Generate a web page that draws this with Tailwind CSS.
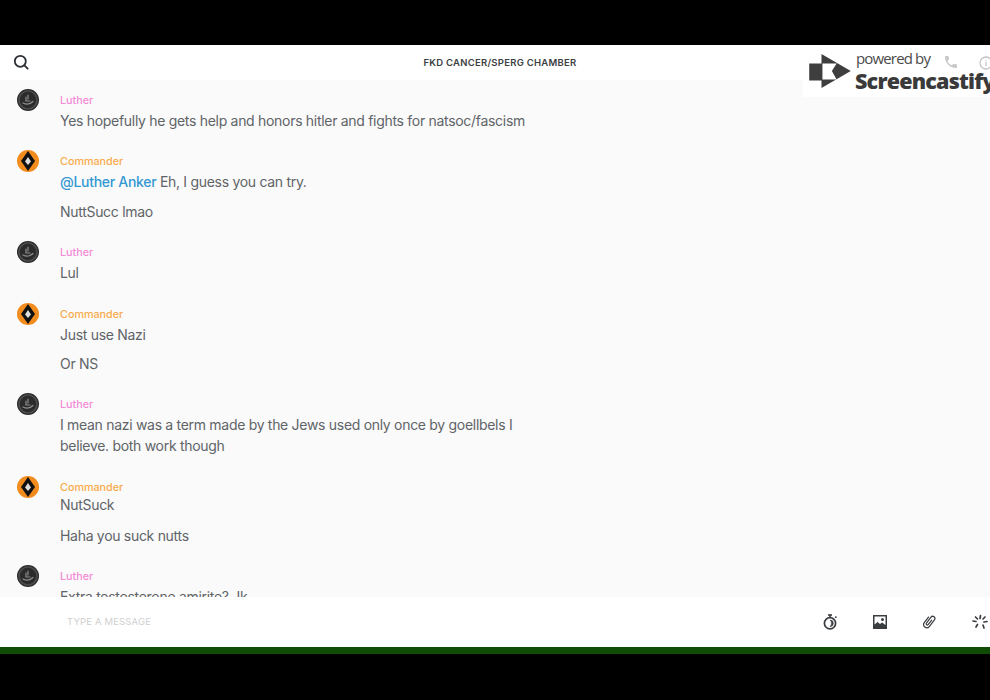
<!DOCTYPE html>
<html lang="en">
<head>
    <meta charset="UTF-8">
    <title>FKD CANCER/SPERG CHAMBER</title>
    <script src="https://cdn.jsdelivr.net/npm/@tailwindcss/browser@4"></script>
</head>
<body class="bg-black font-['Inter',sans-serif] overflow-hidden">
    <div class="h-[700px] w-[990px] flex flex-col pt-[45px] pb-[46px] relative overflow-hidden">

        <!-- Header -->
        <header class="h-[35px] shrink-0 bg-white relative flex items-center justify-center pl-[10px] pt-[1px]">
            <svg class="absolute left-[13px] top-[9px] w-[16px] h-[16px]" viewBox="0 0 16 16" fill="none" stroke="#2b2f33" stroke-width="1.8" stroke-linecap="round">
                <circle cx="7.300" cy="7.300" r="5.500"/>
                <path d="M11.400 11.400 14.700 14.700"/>
            </svg>
            <h1 class="text-[9.5px] font-semibold tracking-[0.27px] text-[#3c4043]">FKD CANCER/SPERG CHAMBER</h1>
        </header>

        <!-- Messages -->
        <main class="h-[517px] shrink-0 bg-[#fafafa] overflow-hidden pt-[9px] text-[14px] leading-[21px] tracking-[-0.3px] text-[#606468]">

            <section class="flex pl-[17px] h-[61px]">
                <div class="w-[22px] h-[22px] rounded-full bg-[#2b2b2b] mr-[21px] flex items-center justify-center shrink-0">
                    <svg class="w-[20px] h-[20px]" viewBox="0 0 20 20" fill="none" stroke="#8d8d8d" stroke-width="1.200"><circle cx="10" cy="10" r="9" stroke="#4d4d4d" stroke-width="1.600"/><path d="M5 13c3 1.500 7 1.500 10-1.500M10 5v4M8 7v4h4" stroke-linecap="round"/></svg>
                </div>
                <div>
                    <div class="h-[21px] text-[10.75px] leading-[23px] tracking-normal font-medium text-[#f48ad6]">Luther</div>
                    <p>Yes hopefully he gets help and honors hitler and fights for natsoc/fascism</p>
                </div>
            </section>

            <section class="flex pl-[17px] h-[91px]">
                <div class="w-[22px] h-[22px] rounded-full bg-[#f28c1e] mr-[21px] flex items-center justify-center shrink-0">
                    <svg class="w-[16px] h-[20px]" viewBox="0 0 16 20"><path d="M8 0 15 10 8 20 1 10Z" fill="#111"/><path d="M8 6 11 10.500 8 14 5 10.500Z" fill="#ddd"/></svg>
                </div>
                <div>
                    <div class="h-[21px] text-[10.75px] leading-[23px] tracking-normal font-medium text-[#f9aa4b]">Commander</div>
                    <p><span class="font-medium text-[#3498d3]">@Luther Anker</span> Eh, I guess you can try.</p>
                    <p class="mt-[9px]">NuttSucc lmao</p>
                </div>
            </section>

            <section class="flex pl-[17px] h-[62px]">
                <div class="w-[22px] h-[22px] rounded-full bg-[#2b2b2b] mr-[21px] flex items-center justify-center shrink-0">
                    <svg class="w-[20px] h-[20px]" viewBox="0 0 20 20" fill="none" stroke="#8d8d8d" stroke-width="1.200"><circle cx="10" cy="10" r="9" stroke="#4d4d4d" stroke-width="1.600"/><path d="M5 13c3 1.500 7 1.500 10-1.500M10 5v4M8 7v4h4" stroke-linecap="round"/></svg>
                </div>
                <div>
                    <div class="h-[21px] text-[10.75px] leading-[23px] tracking-normal font-medium text-[#f48ad6]">Luther</div>
                    <p>Lul</p>
                </div>
            </section>

            <section class="flex pl-[17px] h-[90px]">
                <div class="w-[22px] h-[22px] rounded-full bg-[#f28c1e] mr-[21px] flex items-center justify-center shrink-0">
                    <svg class="w-[16px] h-[20px]" viewBox="0 0 16 20"><path d="M8 0 15 10 8 20 1 10Z" fill="#111"/><path d="M8 6 11 10.500 8 14 5 10.500Z" fill="#ddd"/></svg>
                </div>
                <div>
                    <div class="h-[21px] text-[10.75px] leading-[23px] tracking-normal font-medium text-[#f9aa4b]">Commander</div>
                    <p>Just use Nazi</p>
                    <p class="mt-[8px]">Or NS</p>
                </div>
            </section>

            <section class="flex pl-[17px] h-[83px]">
                <div class="w-[22px] h-[22px] rounded-full bg-[#2b2b2b] mr-[21px] flex items-center justify-center shrink-0">
                    <svg class="w-[20px] h-[20px]" viewBox="0 0 20 20" fill="none" stroke="#8d8d8d" stroke-width="1.200"><circle cx="10" cy="10" r="9" stroke="#4d4d4d" stroke-width="1.600"/><path d="M5 13c3 1.500 7 1.500 10-1.500M10 5v4M8 7v4h4" stroke-linecap="round"/></svg>
                </div>
                <div class="w-[470px]">
                    <div class="h-[21px] text-[10.75px] leading-[23px] tracking-normal font-medium text-[#f48ad6]">Luther</div>
                    <p>I mean nazi was a term made by the Jews used only once by goellbels I believe. both work though</p>
                </div>
            </section>

            <section class="flex pl-[17px] h-[89px]">
                <div class="w-[22px] h-[22px] rounded-full bg-[#f28c1e] mr-[21px] flex items-center justify-center shrink-0">
                    <svg class="w-[16px] h-[20px]" viewBox="0 0 16 20"><path d="M8 0 15 10 8 20 1 10Z" fill="#111"/><path d="M8 6 11 10.500 8 14 5 10.500Z" fill="#ddd"/></svg>
                </div>
                <div>
                    <div class="h-[18px] text-[10.75px] leading-[23px] tracking-normal font-medium text-[#f9aa4b]">Commander</div>
                    <p>NutSuck</p>
                    <p class="mt-[10px]">Haha you suck nutts</p>
                </div>
            </section>

            <section class="flex pl-[17px]">
                <div class="w-[22px] h-[22px] rounded-full bg-[#2b2b2b] mr-[21px] flex items-center justify-center shrink-0">
                    <svg class="w-[20px] h-[20px]" viewBox="0 0 20 20" fill="none" stroke="#8d8d8d" stroke-width="1.200"><circle cx="10" cy="10" r="9" stroke="#4d4d4d" stroke-width="1.600"/><path d="M5 13c3 1.500 7 1.500 10-1.500M10 5v4M8 7v4h4" stroke-linecap="round"/></svg>
                </div>
                <div>
                    <div class="h-[21px] text-[10.75px] leading-[23px] tracking-normal font-medium text-[#f48ad6]">Luther</div>
                    <p>Extra testosterone amirite? Jk</p>
                </div>
            </section>
        </main>

        <!-- Input bar -->
        <footer class="h-[50px] shrink-0 bg-white flex items-center pl-[67px] pr-[2px]">
            <span class="pt-[1px] text-[9.5px] tracking-[0.15px] text-[#cfcfcf]">TYPE A MESSAGE</span>
            <div class="ml-auto flex items-center gap-[34px] text-[#3a3d40]">
                <svg class="w-[16px] h-[16px]" viewBox="0 0 16 16" fill="none" stroke="currentColor"><path d="M6 1h4" stroke-width="1.600"/><path d="M8 1v2" stroke-width="1.600"/><circle cx="8" cy="9.300" r="5.600" stroke-width="1.700"/><path d="M8 6a3.300 3.300 0 0 1 0 6.600c1-1 1.500-2 1.500-3.300S9 7 8 6Z" fill="currentColor" stroke-width="0.600"/><circle cx="13.800" cy="3.200" r="0.900" fill="currentColor" stroke="none"/></svg>
                <svg class="w-[16px] h-[16px]" viewBox="0 0 16 16"><path fill="currentColor" fill-rule="evenodd" d="M1 1h14v14H1Zm1.500 1.500v8l3-2.500 2.500 2 2-1.500 3.500 2.500v-8.500Z"/><circle cx="10.500" cy="5.500" r="1.500" fill="currentColor"/></svg>
                <svg class="w-[16px] h-[16px]" viewBox="0 0 16 16" fill="none" stroke="currentColor" stroke-width="1.200" stroke-linecap="round"><g transform="rotate(38 8 8)"><path d="M8.200 5.500V11a1.200 1.200 0 0 1-2.400 0V3.600a2.200 2.200 0 0 1 4.400 0V12a3.200 3.200 0 0 1-6.400 0V5"/></g></svg>
                <svg class="w-[16px] h-[16px]" viewBox="0 0 16 16" fill="none" stroke="currentColor" stroke-width="1.700" stroke-linecap="round"><path d="M3.500 3 5.500 5M8.500 1.500 8 4.500M13 3 11 5M15 7.500 12 8M11 11 12 14M5.500 10.500 4 13M1 7 4 7.500"/></svg>
            </div>
        </footer>
        <div class="h-[7px] shrink-0 bg-[#0f4d05]"></div>

        <!-- Screencastify watermark -->
        <div class="absolute left-[803px] top-[45px] w-[187px] h-[52px] bg-white/90 overflow-hidden">
            <svg class="absolute left-[5px] top-[9px] w-[44px] h-[34px]" viewBox="0 0 44 36"><path fill="#3e3e3e" d="M13 0 44 18 13 36ZM0 10H13V28H0Z"/><path fill="#fff" d="M14 10H29L24 18 29 27H14Z"/></svg>
            <span class="absolute left-[53px] top-[2px] font-['Open_Sans',sans-serif] text-[15px] leading-[22px] tracking-[-0.85px] text-[#4a4a4a]">powered by</span>
            <span class="absolute left-[52px] top-[21px] font-['Open_Sans',sans-serif] text-[21.5px] leading-[30px] font-extrabold tracking-[-0.8px] text-[#3a3a3a]">Screencastify</span>
            <svg class="absolute left-[140px] top-[9px] w-[16px] h-[16px]" viewBox="0 0 24 24" fill="#c8c8c8"><path d="M6.620 10.790c1.440 2.830 3.760 5.140 6.590 6.590l2.200-2.200c.27-.27.67-.36 1.020-.24 1.120.37 2.330.57 3.570.57.55 0 1 .45 1 1V20c0 .55-.45 1-1 1-9.390 0-17-7.610-17-17 0-.55.45-1 1-1h3.500c.55 0 1 .45 1 1 0 1.250.2 2.450.57 3.570.11.350.03.740-.25 1.020l-2.200 2.200z"/></svg>
            <svg class="absolute left-[176px] top-[11px] w-[14px] h-[14px]" viewBox="0 0 14 14" fill="none" stroke="#c4c4c4" stroke-width="1.300"><circle cx="7" cy="7" r="6"/><path d="M7 6v4M7 3.500v1"/></svg>
        </div>
    </div>
</body>
</html>
